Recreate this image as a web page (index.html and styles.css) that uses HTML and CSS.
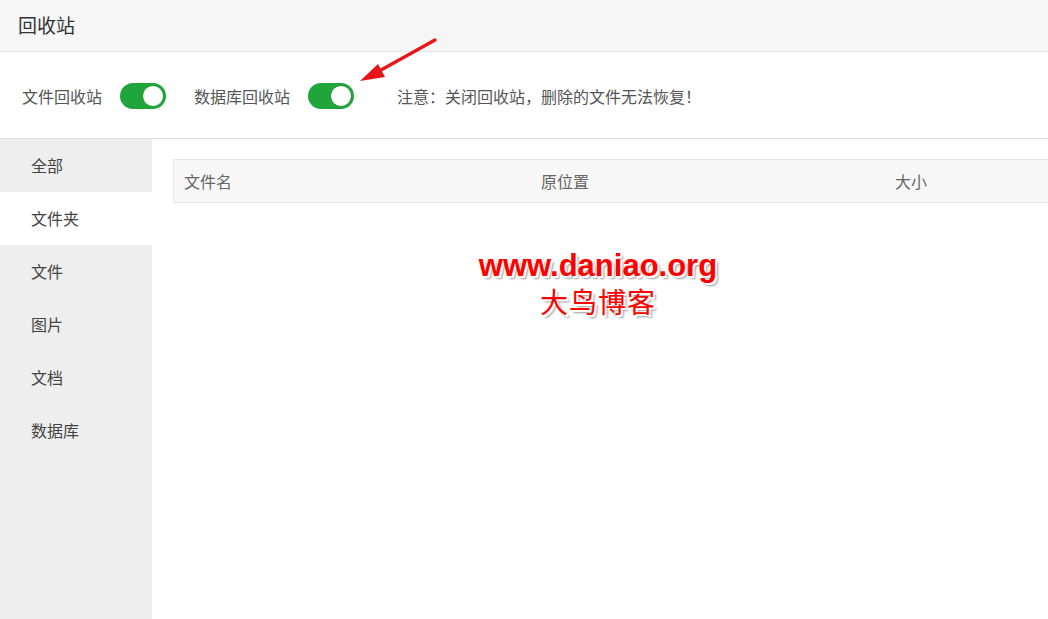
FILE: index.html
```html
<!DOCTYPE html>
<html lang="zh-CN">
<head>
<meta charset="utf-8">
<title>回收站</title>
<link rel="stylesheet" href="styles.css">
</head>
<body>
<div class="page">
  <header class="header">回收站</header>
  <div class="toolbar">
    <span class="label">文件回收站</span>
    <span class="toggle on"><span class="knob"></span></span>
    <span class="label label-2">数据库回收站</span>
    <span class="toggle on"><span class="knob"></span></span>
    <span class="note">注意：关闭回收站，删除的文件无法恢复！</span>
  </div>
  <div class="body">
    <nav class="sidebar">
      <div class="item">全部</div>
      <div class="item active">文件夹</div>
      <div class="item">文件</div>
      <div class="item">图片</div>
      <div class="item">文档</div>
      <div class="item">数据库</div>
    </nav>
    <main class="content">
      <div class="thead">
        <div class="col col-name">文件名</div>
        <div class="col col-path">原位置</div>
        <div class="col col-size">大小</div>
      </div>
    </main>
  </div>
  <div class="watermark">
    <div class="wm-url">www.daniao.org</div>
    <div class="wm-cn">大鸟博客</div>
  </div>
  <svg class="arrow" width="90" height="50" viewBox="0 0 90 50">
    <line x1="83" y1="2" x2="20" y2="37" stroke="#e8141a" stroke-width="3.2" stroke-linecap="round"/>
    <polygon points="8,43 26,26 33,39" fill="#e8141a"/>
  </svg>
</div>
</body>
</html>
```
FILE: styles.css
```css
* { box-sizing: border-box; }
html, body { margin: 0; padding: 0; }
body {
  font-family: "Noto Sans CJK SC", "Noto Sans", sans-serif;
  color: #444;
  background: #fff;
  width: 1048px;
  height: 619px;
  overflow: hidden;
}
.page { position: relative; height: 619px; display: flex; flex-direction: column; }
.header {
  height: 52px;
  background: #f6f6f6;
  border-bottom: 1px solid #e6e6e6;
  padding-left: 18px;
  font-size: 19px;
  line-height: 50px;
  color: #333;
}
.toolbar {
  height: 87px;
  border-bottom: 1px solid #dcdcdc;
  display: flex;
  align-items: center;
  padding-left: 22px;
  padding-top: 2px;
  font-size: 16px;
  color: #555;
}
.label { margin-right: 18px; }
.label-2 { margin-left: 28px; margin-right: 18px; }
.toggle {
  width: 46px;
  height: 26px;
  border-radius: 13px;
  background: #20a53a;
  display: inline-flex;
  align-items: center;
  justify-content: flex-end;
  padding-right: 2px;
}
.knob {
  width: 22px;
  height: 22px;
  border-radius: 50%;
  background: #fff;
  border: 1px solid #1a9a34;
}
.note { margin-left: 43px; font-size: 16px; color: #555; }
.body { flex: 1; display: flex; }
.sidebar { width: 152px; background: #eeeeee; }
.item {
  height: 53px;
  line-height: 53px;
  padding-left: 31px;
  font-size: 16px;
  color: #444;
}
.item.active { background: #fff; }
.content { flex: 1; padding: 20px 0 0 21px; }
.thead {
  height: 44px;
  background: #f7f7f7;
  border: 1px solid #e6e6e6;
  border-right: none;
  display: flex;
  align-items: center;
  font-size: 16px;
  color: #666;
}
.col-name { width: 367px; padding-left: 10px; }
.col-path { width: 354px; }
.col-size { flex: 1; }
.watermark {
  position: absolute;
  left: 468px;
  top: 248px;
  width: 260px;
  text-align: center;
  color: #f00;
}
.wm-url {
  font-family: "Liberation Sans", Arial, sans-serif;
  font-weight: bold;
  font-size: 31px;
  line-height: 36px;
  text-shadow: 2px 2px 0 #fff, 3px 3px 2px #999;
}
.wm-cn {
  font-family: "Noto Sans CJK SC", sans-serif;
  font-size: 28px;
  line-height: 34px;
  letter-spacing: 1px;
  text-shadow: 2px 2px 0 #fff, 3px 3px 2px #999;
}
.arrow { position: absolute; left: 352px; top: 38px; }
```
